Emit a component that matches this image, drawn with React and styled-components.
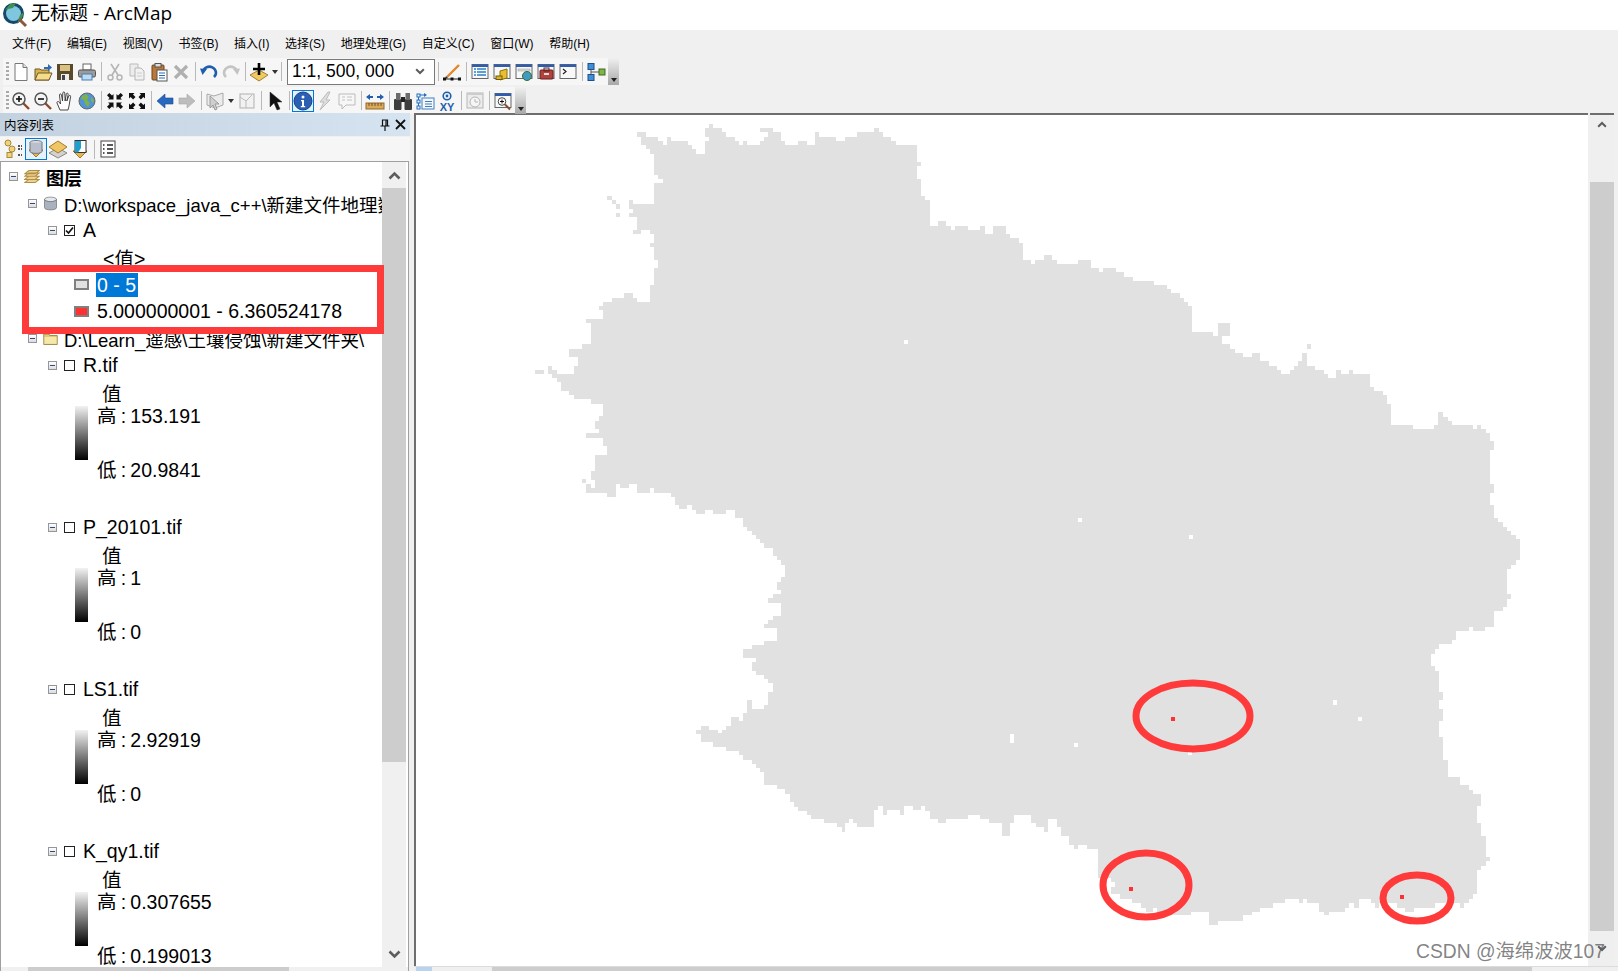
import React from "react";
import styled, { createGlobalStyle } from "styled-components";

//MAP OUTLINE - traced from the raster, each piece with its own origin and scale
const seg = (ox, oy, sx, sy, pts) => {
    const out = [];
    for (let i = 0; i < pts.length; i += 2) {
        out.push(Math.round(ox + pts[i] / sx) + "," + Math.round(oy + pts[i + 1] / sy));
    }
    return out;
};

const north = seg(520, 110, 2.8, 3, [328,66,353,66,353,80,386,80,386,93,400,93,400,105,412,105,412,80,423,80,423,93,470,93,470,105,482,105,482,117,493,117,493,131,518,131,518,93,529,93,529,80,518,80,518,54,529,54,529,42,540,42,540,54,566,54,566,66,577,66,577,80,602,80,602,93,613,93,613,105,624,105,624,93,636,93,636,105,672,105,672,93,683,93,683,80,694,80,694,66,672,66,672,54,708,54,708,66,731,66,731,93,742,93,742,105,778,105,778,93,804,93,804,105,826,105,826,66,837,66,837,80,885,80,885,93,910,93,910,80,944,80,944,66,991,66,991,54,1005,54,1005,66,1016,66,1016,80,1040,80,1040,93,1053,93,1053,105,1112,105,1112,155,1123,155,1123,167,1112,167,1112,207,1123,207,1123,258,1134,258,1134,270,1148,270,1148,348,1170,348,1170,333,1193,333,1193,348,1207,348,1207,360,1218,360,1218,348,1254,348,1254,360,1288,360,1288,348,1302,348,1302,372,1324,372,1324,348,1361,348,1361,372,1372,372,1372,384,1396,384,1396,399,1408,399,1408,450,1431,450,1431,462,1442,462,1442,450,1467,450,1467,435,1490,435,1490,450,1504,450,1504,462,1562,462,1562,450]);
const northEast = seg(1030, 240, 3, 3, [144,60,183,60,183,84,207,84,207,96,219,96,219,84,258,84,258,96,282,96,282,111,309,111,309,123,372,123,372,135,411,135,411,147,423,147,423,159,450,159,450,174,462,174,462,186,474,186,474,198,486,198,486,276,549,276,549,288,564,288,564,249,600,249,600,288,576,288,576,312,600,312,600,327,615,327,615,339,639,339,639,351,666,351,666,339,690,339,690,363,717,363,717,378,741,378,741,390,753,390,753,402,780,402,780,390,792,390,792,378,804,378,804,363,816,363,816,339,831,339,831,378,855,378,855,390,882,390,882,402,894,402,894,414,918,414,918,390,933,390,933,402,957,402,957,390,969,390,969,402,1020,402,1020,441,1032,441,1032,453,1059,453,1059,465,1071,465,1071,492,1083,492,1083,555,1149,555,1149,567,1212,567,1212,555,1224,555,1224,516]);
const east = seg(1059, 400, 2.796, 2.904, [1073,36,1073,48,1087,48,1087,60,1100,60,1100,72,1158,72,1158,84,1168,84,1168,72,1180,72,1180,84,1194,84,1194,96,1206,96,1206,120,1217,120,1217,144,1206,144,1206,243,1217,243,1217,270,1206,270,1206,305,1217,305,1217,342,1228,342,1228,354,1241,354,1241,368,1253,368,1253,380,1265,380,1265,392,1277,392,1277,404,1290,404,1290,464,1277,464,1277,478,1265,478,1265,490,1253,490,1253,562,1265,562,1265,577,1253,577,1253,600,1241,600,1241,612,1217,612,1217,660,1192,660,1192,672,1158,672,1158,660,1146,660,1146,672,1110,672,1110,698,1100,698,1100,710,1062,710,1062,722,1050,722,1050,737,1040,737,1040,772,1050,772,1050,786,1062,786,1062,848,1073,848,1073,870,1062,870,1062,897,1073,897,1073,932,1062,932,1062,980,1073,980,1073,1044,1087,1044,1087,1095,1121,1095,1121,1118,1146,1118,1146,1132,1158,1132,1158,1144,1180,1144,1180,1178,1168,1178,1168,1228,1180,1228,1180,1265,1194,1265,1194,1326,1206,1326,1206,1340,1194,1340,1194,1354,1180,1354,1180,1365,1168,1365,1168,1436,1158,1436,1158,1448,1146,1448,1146,1460,1133,1460,1133,1474,1121,1474,1121,1460,1052,1460,1052,1474,992,1474,992,1486,968,1486,968,1474,945,1474,945,1460,895,1460,895,1474,884,1474,884,1460,872,1460,872,1448,838,1448,838,1474,824,1474,824,1462,812,1462,812,1474,800,1474,800,1486,754,1486,754,1497,742,1497,742,1486,728,1486,728,1462,694,1462,694,1448,682,1448,682,1462,670,1462,670,1448,632,1448,632,1462,598,1462,598,1474,562,1474,562,1486,540,1486,540,1497,514,1497,514,1512,444,1512,444,1524,420,1524,420,1486,370,1486,370,1497,310,1497,310,1486,275,1486,275,1474,264,1474,264,1486,242,1486,242,1474,228,1474,228,1462,205,1462,205,1448,170,1448,170,1436,146,1436,146,1413,157,1413,157,1400,146,1400,146,1388,134,1388,110,1388,110,1303]);
const south = seg(660, 500, 3, 3, [1280,1047,1280,1034,1254,1034,1254,1047,1242,1047,1242,1034,1228,1034,1228,1008,1203,1008,1203,982,1190,982,1190,957,1165,957,1165,995,1152,995,1152,982,1127,982,1127,970,1113,970,1113,945,1063,945,1063,970,1050,970,1050,1007,1027,1007,1027,970,988,970,988,957,960,957,960,945,925,945,925,957,858,957,858,970,835,970,835,957,810,957,810,932,795,932,795,918,783,918,783,930,760,930,760,918,733,918,733,945,720,945,720,930,682,930,682,945,668,945,668,918,655,918,655,930,642,930,642,980,592,980,592,970,580,970,580,957,566,957,566,970,555,970,555,995,545,995,545,982,530,982,530,970,492,970,492,957,453,957,453,945,440,945,440,932,415,932,415,920,403,920,403,907,390,907,390,882,375,882,375,868,350,868,350,855,312,855,312,815,300,815,300,805,288,805,288,792,275,792,275,780,250,780,250,765,237,765,237,752,198,752,198,740,160,740,160,727,122,727,122,703,108,703,108,690,122,690,122,678,147,678,147,690,175,690,175,700,187,700,187,690,198,690,198,678,212,678,212,652,237,652,237,662,250,662,250,640,262,640,262,600,275,600,275,627,312,627,312,615,325,615,325,575,338,575,338,550,325,550,325,537,312,537,312,525,288,525,288,512,275,512,275,487,288,487,288,475,250,475,250,447,275,447,275,435,312,435,312,422,350,422,350,385,312,385,312,372,325,372,325,360,338,360,338,348,362,348,362,308,325,308,325,295,338,295,338,282,362,282,362,270,350,270,350,245,362,245,362,232,375,232,375,195,362,195,362,180,350,180,350,168,338,168,338,143,312,143,312,130,300,130,300,117,288,117,288,105,275,105,275,92,262,92,262,80,250,80,250,55,225,55,225,30,198,30,198,42,160,42,160,30,135,30,135,42,108,42,108,30,95,30,95,15,82,15,82,28,58,28,58,15,45,15,45,0]);
const west = seg(520, 110, 2.8, 3, [434,1160,424,1160,424,1148,375,1148,375,1134,364,1134,364,1148,328,1148,328,1122,305,1122,305,1134,280,1134,280,1122,269,1122,269,1160,244,1160,244,1148,185,1148,185,1122,199,1122,199,1134,210,1134,210,1110,199,1110,199,1083,210,1083,210,1035,244,1035,244,1008,232,1008,232,984,185,984,185,970,221,970,221,958,210,958,210,934,221,934,221,918,232,918,232,882,199,882,199,866,151,866,151,854,137,854,137,842,115,842,115,816,104,816,104,804,90,804,90,792,78,792,78,768,90,768,90,780,104,780,104,792,151,792,151,768,162,768,162,740,137,740,137,717,174,717,174,702,199,702,199,640,185,640,185,628,232,628,232,600,221,600,221,588,232,588,232,576,258,576,258,564,291,564,291,549,316,549,316,564,328,564,328,576,364,576,364,525,375,525,375,474,386,474,386,450,375,450,375,411,364,411,364,399,375,399,375,372,364,372,364,360,340,360,340,372,316,372,316,360,328,360,328,321,305,321,305,309,316,309,316,296,305,296,305,270,316,270,316,282,375,282,375,219,400,219,400,207,386,207,386,195,375,195,375,131,364,131,364,117,353,117,353,105,340,105,340,80,328,80]);
const OUTLINE = [...north, ...northEast, ...east, ...south, ...west].join(" ");

const ISLANDS = [[535,370,9,4],[582,479,4,4],[607,196,5,4],[612,200,4,4],[616,204,4,5],[616,213,4,4],[1307,344,4,5]];
const HOLES = [[904,340,4,4],[1078,518,4,4],[1189,535,4,4],[1333,700,4,5],[1358,717,4,4],[1074,743,4,4],[1188,752,4,3],[1010,734,4,9]];
const DOTS = [[1171,717],[1129,887],[1400,895]];
const CIRCLES = [[1193,716,57,33],[1146,885,43,32],[1417,898,34,23]];

//ICONS
const Svg = ({ children, size = 20 }) => <svg width={size} height={size} viewBox="0 0 20 20">{children}</svg>;
const Mag = ({ sign }) => (
    <Svg>
        <path d="M12 12l6 6" stroke="#8a4b2d" strokeWidth="2.4" />
        <circle cx="8" cy="8" r="6" fill="#f4f4f4" stroke="#555" strokeWidth="1.5" />
        <path d="M5 8h6" stroke="#111" strokeWidth="1.6" />
        {sign && <path d="M8 5v6" stroke="#111" strokeWidth="1.6" />}
    </Svg>
);
const Win = ({ children }) => (
    <Svg>
        <rect x="2" y="2.5" width="16" height="14" fill="#f8f8f8" stroke="#666" />
        <rect x="2" y="2.5" width="16" height="2.5" fill="#2d5cb0" />
        {children}
    </Svg>
);
const Globe = () => (
    <Svg>
        <circle cx="10" cy="10" r="8" fill="#4f94d6" stroke="#666" />
        <path d="M5 5l4-2 3 3-2 3 3 3-2 4-3-3-1-4-3-1zM14 6l3 3-1 3-2-2z" fill="#7db04e" />
    </Svg>
);
// four small corner arrows, one drawn and mirrored
const Arrows = ({ out }) => (
    <Svg>
        {["", "translate(20 0) scale(-1 1)", "translate(0 20) scale(1 -1)", "translate(20 20) scale(-1 -1)"].map((t) => (
            <g key={t} transform={t}>
                {out
                    ? <path d="M2 2h5.5L6 3.6l2.5 2.5-2.4 2.4L3.6 6 2 7.5z" fill="#111" />
                    : <path d="M8.5 8.5H3L4.6 7 2 4.3 4.3 2 7 4.6 8.5 3z" fill="#111" />}
            </g>
        ))}
    </Svg>
);
const Horizontal = ({ left, color, rim }) => (
    <Svg>
        <path d={left ? "M2 10l8-7v4h8v6h-8v4z" : "M18 10l-8-7v4H2v6h8v4z"} fill={color} stroke={rim} strokeWidth=".6" />
    </Svg>
);
const Diamond = ({ children }) => (
    <Svg>
        <path d="M10 8l9 5-9 6-9-6z" fill="#f0c95f" stroke="#a5803a" />
        {children}
    </Svg>
);

const icons = {
    doc: <Svg><path d="M4 1.5h8l4 4v13H4z" fill="#fff" stroke="#777" /><path d="M12 1.5v4h4" fill="#ddd" stroke="#777" /></Svg>,
    open: <Svg><path d="M2 7h5l1 1h8v10H2z" fill="#d8b350" stroke="#6e5a22" /><path d="M2 18l3-7h14l-3 7z" fill="#f4dc8c" stroke="#6e5a22" /><path d="M11 5h4V2l4 3.5-4 3.5V7h-4z" fill="#2d6bb5" /></Svg>,
    save: <Svg><rect x="2" y="2" width="16" height="16" fill="#5a4a2c" /><rect x="5" y="3" width="10" height="6" fill="#d9c083" /><rect x="6" y="12" width="8" height="6" fill="#eee" /><rect x="7" y="13" width="3" height="5" fill="#444" /></Svg>,
    print: <Svg><rect x="6" y="2" width="8" height="6" fill="#fff" stroke="#666" /><rect x="1.5" y="8" width="17" height="7" rx="1.5" fill="#9b9b9b" stroke="#555" /><rect x="5" y="12" width="10" height="6" fill="#bcdcf5" stroke="#4a7fb5" /></Svg>,
    cut: <Svg><path d="M6 2l7 11M14 2L7 13" stroke="#b5b5b5" strokeWidth="1.6" /><circle cx="5.5" cy="15.5" r="2.5" fill="none" stroke="#b5b5b5" strokeWidth="1.5" /><circle cx="14.5" cy="15.5" r="2.5" fill="none" stroke="#b5b5b5" strokeWidth="1.5" /></Svg>,
    copy: <Svg><path d="M3 2h8v12H3z" fill="#ececec" stroke="#bbb" /><path d="M8 6h6l3 3v9H8z" fill="#f1f1f1" stroke="#b5b5b5" /><path d="M10 11h5M10 14h5" stroke="#ccc" /></Svg>,
    paste: <Svg><rect x="3" y="3" width="12" height="15" rx="1" fill="#b9793a" stroke="#6b4420" /><rect x="6" y="1.5" width="6" height="3.5" fill="#ddd" stroke="#555" /><rect x="8" y="8" width="10" height="11" fill="#fff" stroke="#555" /><path d="M10 11h6M10 13.5h6M10 16h6" stroke="#2d6bb5" /></Svg>,
    del: <Svg><path d="M4 4l12 12M16 4L4 16" stroke="#b0b0b0" strokeWidth="3.2" /></Svg>,
    undo: <Svg><path d="M4 10a6.5 6 0 1 1 11 5" fill="none" stroke="#1f5fae" strokeWidth="2.6" /><path d="M1 6.5l7 .5-4.5 6z" fill="#1f5fae" /></Svg>,
    redo: <Svg><path d="M16 10a6.5 6 0 1 0-11 5" fill="none" stroke="#c4c4c4" strokeWidth="2.6" /><path d="M19 6.5l-7 .5 4.5 6z" fill="#c4c4c4" /></Svg>,
    add: <Diamond><path d="M10 1v12M4 7h12" stroke="#000" strokeWidth="2.6" /></Diamond>,
    edit: <Svg><path d="M5 15L17 3" stroke="#e0882a" strokeWidth="2.4" /><path d="M3 17l1-3 2 2z" fill="#333" /><path d="M2 17h16" stroke="#222" /><rect x="1" y="15.5" width="3" height="3" fill="#111" /><rect x="8.5" y="15.5" width="3" height="3" fill="#111" /><rect x="16" y="15.5" width="3" height="3" fill="#111" /></Svg>,
    toc: <Win><path d="M4 7h2M7 7h9M4 10h2M7 10h9M4 13h2M7 13h9" stroke="#2d7fc9" strokeWidth="1.3" /></Win>,
    catalog: <Win><path d="M8 9l7-2v9l-7 2z" fill="#e8c02e" stroke="#8a6f12" /><rect x="4" y="14" width="6" height="3.5" fill="#d9b429" stroke="#6f5a10" /></Win>,
    search: <Win><rect x="4" y="7" width="12" height="2" fill="#ddd" stroke="#999" strokeWidth=".5" /><circle cx="13" cy="14" r="4.5" fill="#3f9ac4" stroke="#3b6f2c" /></Win>,
    tools: <Win><rect x="4" y="8" width="13" height="9" rx="1" fill="#b4413c" stroke="#632320" /><rect x="8" y="6" width="5" height="3" fill="none" stroke="#632320" /><rect x="8" y="11" width="5" height="2" fill="#ddd" /></Win>,
    cmd: <Win><path d="M5 7l3 2.5L5 12" fill="none" stroke="#222" strokeWidth="1.2" /></Win>,
    model: <Svg><rect x="2" y="1.5" width="6" height="6" fill="#3f8fd8" stroke="#1f4f8a" /><rect x="2" y="12.5" width="6" height="6" fill="#3f8fd8" stroke="#1f4f8a" /><rect x="13" y="7" width="6" height="6" fill="#7fb44a" stroke="#3e6a20" /><path d="M5 7.5V10h8M5 12.5V10" fill="none" stroke="#555" /></Svg>,
    zoomIn: <Mag sign />,
    zoomOut: <Mag />,
    pan: <Svg><path d="M5 19l-3-7c-.5-1.5 1.5-2 2.3-.7L5.5 13 4.5 4c0-1.4 1.8-1.4 2 0l1 6 .3-8c.1-1.4 1.9-1.4 2 0l.3 8 1.2-7c.3-1.3 2-1 1.9.3L11.8 10l2-5c.5-1.2 2.2-.7 1.8.6L14 15l-1 4z" fill="#fff" stroke="#333" strokeWidth=".9" /></Svg>,
    globe: <Globe />,
    fixIn: <Arrows />,
    fixOut: <Arrows out />,
    back: <Horizontal left color="#2767c0" rim="#1b4a8c" />,
    forward: <Horizontal color="#bdbdbd" rim="#aaa" />,
    select: <Svg><path d="M2 3l7 2 9-3v12l-8 3-8-3z" fill="#ececec" stroke="#aaa" /><path d="M5 5l0 12 3-3 2 5 2-1-2-5 4 0z" fill="#cfcfcf" stroke="#9c9c9c" /></Svg>,
    clear: <Svg><rect x="3" y="3" width="14" height="14" fill="#f2f2f2" stroke="#b0b0b0" /><path d="M3 6l6 4 6-6M9 10v7" fill="none" stroke="#bbb" /></Svg>,
    cursor: <Svg><path d="M5 1l0 15 4-4 3 7 3-1-3-7 5 0z" fill="#111" stroke="#333" strokeWidth=".5" /></Svg>,
    identify: <Svg size={20}><circle cx="10" cy="10" r="9" fill="#2b5fb4" stroke="#1d3f80" /><circle cx="10" cy="6" r="1.5" fill="#fff" /><path d="M8 9h3v6h1.2v1.2H7.8V15H9v-4.8H8z" fill="#fff" /></Svg>,
    flash: <Svg><path d="M13 1L5 11h4L5 19l10-10h-4l4-8z" fill="#dedede" stroke="#bbb" /></Svg>,
    bubble: <Svg><path d="M2 3h16v11H9l-4 4v-4H2z" fill="#f7f7f7" stroke="#bbb" /><path d="M5 6h3M10 6h5M5 9h3M10 9h5" stroke="#c2c2c2" /></Svg>,
    measure: <Svg><rect x="1" y="12" width="18" height="6" fill="#dba95a" stroke="#8f6a2b" /><path d="M4 12v3M7 12v3M10 12v3M13 12v3M16 12v3" stroke="#6e5020" /><path d="M1 6l4-3v2h3v2H5v2zM19 6l-4-3v2h-3v2h3v2z" fill="#1f5fae" /></Svg>,
    binoculars: <Svg><rect x="1" y="8" width="7.5" height="11" rx="1" fill="#3d3d3d" /><rect x="11.5" y="8" width="7.5" height="11" rx="1" fill="#3d3d3d" /><rect x="3" y="2" width="4.5" height="7" fill="#6b6b6b" /><rect x="12.5" y="2" width="4.5" height="7" fill="#6b6b6b" /><rect x="8" y="6" width="4" height="5" fill="#222" /></Svg>,
    goto: <Svg><rect x="7" y="7" width="12" height="11" fill="#f4f8fc" stroke="#3f7fbf" /><path d="M10 10.5h7M10 13h7M10 15.5h7" stroke="#3f7fbf" /><rect x="2" y="3" width="3" height="3" fill="none" stroke="#1f6fc0" /><rect x="2" y="9" width="3" height="3" fill="none" stroke="#1f6fc0" /><rect x="2" y="15" width="3" height="3" fill="none" stroke="#1f6fc0" /><path d="M3.5 6v3M3.5 12v3M5 4h4" stroke="#1f6fc0" /><path d="M9 2l3 2-3 2z" fill="#1f6fc0" /></Svg>,
    xy: <Svg><circle cx="10" cy="5" r="3.8" fill="none" stroke="#1f5fae" strokeWidth="1.6" /><circle cx="10" cy="5" r="1.4" fill="#1f5fae" /><text x="10" y="19.5" textAnchor="middle" fontFamily="Liberation Sans, sans-serif" fontWeight="700" fontSize="11" fill="#1f5fae">XY</text></Svg>,
    time: <Svg><rect x="2" y="2" width="16" height="15" fill="#ececec" stroke="#b5b5b5" /><rect x="2" y="2" width="16" height="2" fill="#ccc" /><circle cx="10" cy="11" r="5" fill="#f6f6f6" stroke="#b5b5b5" /><path d="M10 8v3h3" fill="none" stroke="#b5b5b5" /></Svg>,
    viewer: <Win><circle cx="9" cy="10.5" r="3.8" fill="#fff" stroke="#444" /><path d="M7 10.5h4M9 8.5v4" stroke="#111" /><path d="M12 13.5l5 5" stroke="#8a4b2d" strokeWidth="2" /></Win>,
    drawOrder: <Svg><circle cx="4" cy="4" r="3" fill="#f1d27a" stroke="#a98a3c" /><circle cx="8" cy="10" r="3" fill="#f1d27a" stroke="#a98a3c" /><rect x="3" y="13.5" width="5" height="5" fill="#f1d27a" stroke="#a98a3c" /><path d="M14 7h4M14 10h4M14 16h4" stroke="#222" strokeWidth="1.5" strokeDasharray="2 1" /></Svg>,
    source: <Svg><path d="M3 11l7 7 7-7z" fill="#e8b651" stroke="#a27a2a" /><ellipse cx="10" cy="3.5" rx="6" ry="2" fill="#dfe3ea" stroke="#777" /><path d="M4 3.5v9c0 2.5 12 2.5 12 0v-9" fill="#b9bfcc" stroke="#777" /></Svg>,
    visibility: <Svg><path d="M10 9l9 5-9 5-9-5z" fill="#d2d2d2" stroke="#888" /><path d="M10 2l9 6-9 6-9-6z" fill="#f0c664" stroke="#a27a2a" /></Svg>,
    selection: <Svg><path d="M3 12l7 7 7-7z" fill="#e8b651" stroke="#a27a2a" /><rect x="5" y="1.5" width="11" height="12" fill="#fff" stroke="#333" /><path d="M5 2h6v7l-3 4.5H5z" fill="#1f9fcf" /></Svg>,
    options: <Svg><rect x="3" y="2" width="14" height="16" fill="#fff" stroke="#444" /><path d="M5 6h1.5M9 6h6M5 10h1.5M9 10h6M5 14h1.5M9 14h6" stroke="#222" strokeWidth="1.4" /></Svg>,
    layers: <Svg size={16}><path d="M1 17h13l5-4H6zM1 13h13l5-4H6zM1 9h13l5-4H6zM1 6h13l5-4H6z" fill="#ecd093" stroke="#b08f42" strokeWidth="1.3" /></Svg>,
    db: <Svg size={15}><ellipse cx="10" cy="4.5" rx="8" ry="3" fill="#e4e8ef" stroke="#777" /><path d="M2 4.5v11c0 4 16 4 16 0v-11c0 4-16 4-16 0z" fill="#aab2c0" stroke="#777" /></Svg>,
    folder: <Svg size={15}><path d="M1 4h7l1 2h10v12H1z" fill="#e5c877" stroke="#8a7431" /><rect x="2" y="8" width="16" height="9" fill="#f6e7ab" /></Svg>,
    tick: <svg width="9" height="9" viewBox="0 0 9 9"><path d="M1 4.5l2.5 2.5L8 1.5" fill="none" stroke="#111" strokeWidth="1.7" /></svg>,
    appGlobe: <svg width="26" height="26" viewBox="0 0 26 26"><circle cx="11.5" cy="11.5" r="10.5" fill="#16486b" /><circle cx="11.5" cy="11.5" r="7.5" fill="#7fc6df" /><path d="M3 8l5-6 6-1-3 5-5 1zM15 22l5-6 2-6-4 3z" fill="#3e8f52" /><path d="M17 17l7 7" stroke="#8a5a3a" strokeWidth="3" /></svg>
};

const Chevron = ({ up, small }) => (
    <svg width={small ? 10 : 13} height={small ? 7 : 9} viewBox="0 0 13 9">
        <path d={up ? "M1.5 7.5l5-5 5 5" : "M1.5 1.5l5 5 5-5"} fill="none" stroke="#5d5d5d" strokeWidth="2.6" />
    </svg>
);

//DATA
const MENU = ["文件(F)", "编辑(E)", "视图(V)", "书签(B)", "插入(I)", "选择(S)", "地理处理(G)", "自定义(C)", "窗口(W)", "帮助(H)"];
const LAYERS = [
    { name: "R.tif", high: "153.191", low: "20.9841" },
    { name: "P_20101.tif", high: "1", low: "0" },
    { name: "LS1.tif", high: "2.92919", low: "0" },
    { name: "K_qy1.tif", high: "0.307655", low: "0.199013" }
];

const App = () => {
    const tool = (names) => names.map((n, i) => {
        if (n === "|") return <Sep key={i} />;
        if (n === "v") return <Drop key={i} />;
        return <Btn key={n} $active={n === "identify" || n === "source"}>{icons[n]}</Btn>;
    });

    return (
        <Page>
            <GlobalStyle />
            <TitleBar>
                {icons.appGlobe}
                <TitleText>无标题 - ArcMap</TitleText>
            </TitleBar>
            <MenuBar>
                {MENU.map((m) => <MenuItem key={m}>{m}</MenuItem>)}
            </MenuBar>
            <Toolbar>
                <Grip />
                {tool(["doc", "open", "save", "print", "|", "cut", "copy", "paste", "del", "|", "undo", "redo", "|", "add", "v"])}
                <Sep $narrow />
                <Combo>
                    <span>1:1, 500, 000</span>
                    <Chevron small />
                </Combo>
                <Sep />
                {tool(["edit", "|", "toc", "catalog", "search", "tools", "cmd", "|", "model"])}
                <EndGrip />
            </Toolbar>
            <Toolbar $second>
                <Grip />
                {tool(["zoomIn", "zoomOut", "pan", "globe", "|", "fixIn", "fixOut", "|", "back", "forward", "|", "select", "v", "clear", "|", "cursor", "|", "identify", "flash", "bubble", "|", "measure", "|", "binoculars", "goto", "xy", "|", "time", "|", "viewer"])}
                <EndGrip />
            </Toolbar>
            <Main>
                <Panel>
                    <PanelTitle>
                        <span>内容列表</span>
                        <PanelActions>
                            <svg width="12" height="12" viewBox="0 0 12 12"><path d="M3.5 1h5v6h-5zM1.5 7h9M6 7v5M7 1v6" fill="none" stroke="#111" strokeWidth="1.2" /></svg>
                            <svg width="11" height="11" viewBox="0 0 11 11"><path d="M1 1l9 9M10 1l-9 9" stroke="#111" strokeWidth="1.8" /></svg>
                        </PanelActions>
                    </PanelTitle>
                    <PanelTools>
                        {tool(["drawOrder", "source", "visibility", "selection", "|", "options"])}
                    </PanelTools>
                    <Tree>
                        <TreeBody>
                            <TreeContent>
                                <Row $left={8} $gap={6}>
                                    <Expander />
                                    {icons.layers}
                                    <RootLabel>图层</RootLabel>
                                </Row>
                                <Row $left={27} $gap={6}>
                                    <Expander />
                                    {icons.db}
                                    <PathLabel>D:\workspace_java_c++\新建文件地理数据库</PathLabel>
                                </Row>
                                <Row $left={47} $gap={7}>
                                    <Expander />
                                    <CheckBox>{icons.tick}</CheckBox>
                                    <Plain>A</Plain>
                                </Row>
                                <Row $left={102}><span>&lt;值&gt;</span></Row>
                                <Row $left={73} $gap={7}>
                                    <Swatch $fill="#e1e1e1" />
                                    <Selected>0 - 5</Selected>
                                </Row>
                                <Row $left={73} $gap={7}>
                                    <Swatch $fill="#ff3030" />
                                    <Plain>5.000000001 - 6.360524178</Plain>
                                </Row>
                                <Row $left={27} $gap={6}>
                                    <Expander />
                                    {icons.folder}
                                    <PathLabel>D:\Learn_遥感\土壤侵蚀\新建文件夹\</PathLabel>
                                </Row>
                                {LAYERS.map((l) => (
                                    <div key={l.name}>
                                        <Row $left={47} $gap={7}>
                                            <Expander />
                                            <CheckBox />
                                            <Plain>{l.name}</Plain>
                                        </Row>
                                        <Row $left={101}><span>值</span></Row>
                                        <Legend>
                                            <Ramp />
                                            <RampLabels>
                                                <span>高 : {l.high}</span>
                                                <span>低 : {l.low}</span>
                                            </RampLabels>
                                        </Legend>
                                    </div>
                                ))}
                                <Highlight />
                            </TreeContent>
                            <TreeScroll>
                                <ArrowCell><Chevron up /></ArrowCell>
                                <TreeThumb />
                                <Spacer />
                                <ArrowCell><Chevron /></ArrowCell>
                            </TreeScroll>
                        </TreeBody>
                        <HScroll><HThumb /></HScroll>
                    </Tree>
                </Panel>
                <MapColumn>
                    <MapRow>
                        <MapPane>
                            <svg width="1172" height="852" viewBox="416 115 1172 852" shapeRendering="crispEdges">
                                <polygon points={OUTLINE} fill="#e1e1e1" />
                                {ISLANDS.map(([x, y, w, h]) => <rect key={x + "-" + y} x={x} y={y} width={w} height={h} fill="#e1e1e1" />)}
                                {HOLES.map(([x, y, w, h]) => <rect key={x + "-" + y} x={x} y={y} width={w} height={h} fill="#fff" />)}
                                {DOTS.map(([x, y]) => <rect key={x} x={x} y={y} width={4} height={4} fill="#ff3030" />)}
                                <g shapeRendering="auto">
                                    {CIRCLES.map(([cx, cy, rx, ry]) => <ellipse key={cx} cx={cx} cy={cy} rx={rx} ry={ry} fill="none" stroke="#ff3a3a" strokeWidth="7" />)}
                                </g>
                            </svg>
                        </MapPane>
                        <MapScroll>
                            <MapArrowTop><Chevron up small /></MapArrowTop>
                            <MapThumb />
                            <MapArrowBottom><Chevron small /></MapArrowBottom>
                        </MapScroll>
                    </MapRow>
                    <MapFooter>
                        <MapTab />
                        <MapHThumb />
                    </MapFooter>
                </MapColumn>
            </Main>
            <Watermark>CSDN @海绵波波107</Watermark>
        </Page>
    );
};

//STYLE
const GlobalStyle = createGlobalStyle`
    html, body {
        margin: 0;
        padding: 0;
        height: 100%;
        overflow: hidden;
        background: #f0f0f0;
    }
`;

const CJK = `"Liberation Sans", "Noto Sans CJK SC", sans-serif`;

const Page = styled.div`
    position: relative;
    width: 1618px;
    height: 971px;
    overflow: hidden;
    display: flex;
    flex-direction: column;
    background: #f0f0f0;
    font-family: ${CJK};
    color: #000;
`;

const TitleBar = styled.div`
    height: 30px;
    display: flex;
    align-items: center;
    gap: 3px;
    padding-left: 2px;
    background: #fff;
`;

const TitleText = styled.div`
    font-family: "Open Sans", "Noto Sans CJK SC", sans-serif;
    font-size: 19px;
    line-height: 24px;
    padding-bottom: 5px;
`;

const MenuBar = styled.div`
    height: 28px;
    box-sizing: border-box;
    display: flex;
    align-items: center;
    gap: 15.7px;
    padding: 0 0 4px 12px;
    font-size: 12px;
`;

const MenuItem = styled.div`
    white-space: nowrap;
`;

const Toolbar = styled.div`
    height: 27px;
    width: fit-content;
    display: flex;
    align-items: center;
    padding-left: 3px;
    margin-left: 3px;
    margin-top: ${(p) => (p.$second ? "2px" : "0")};
    margin-bottom: ${(p) => (p.$second ? "-1px" : "0")};
    background: #f6f6f6;
`;

const Grip = styled.div`
    width: 3px;
    height: 20px;
    margin-right: 1px;
    background: repeating-linear-gradient(to bottom, #a9a9a9 0 2px, transparent 2px 4px);
`;

const EndGrip = styled.div`
    width: 11px;
    align-self: stretch;
    margin-left: 1px;
    background: linear-gradient(to bottom, #f0f0f0, #a8a8a8);
    position: relative;
    &::after {
        content: "";
        position: absolute;
        left: 2.5px;
        bottom: 3px;
        border-top: 4px solid #222;
        border-left: 3px solid transparent;
        border-right: 3px solid transparent;
    }
`;

const Btn = styled.div`
    width: 22px;
    height: 22px;
    flex: none;
    box-sizing: border-box;
    display: flex;
    align-items: center;
    justify-content: center;
    border: ${(p) => (p.$active ? "1px solid #0078d7" : "none")};
    background: ${(p) => (p.$active ? "#e5f1fb" : "transparent")};
`;

const Sep = styled.div`
    width: 1px;
    height: 19px;
    flex: none;
    margin: 0 ${(p) => (p.$narrow ? "1px" : "2.5px")};
    background: #b9b9b9;
`;

const Drop = styled.div`
    width: 10px;
    flex: none;
    display: flex;
    justify-content: center;
    &::after {
        content: "";
        border-top: 4px solid #333;
        border-left: 3.5px solid transparent;
        border-right: 3.5px solid transparent;
    }
`;

const Combo = styled.div`
    width: 148px;
    height: 26px;
    flex: none;
    box-sizing: border-box;
    display: flex;
    align-items: center;
    justify-content: space-between;
    margin-left: 4px;
    padding: 0 9px 0 4px;
    background: #fff;
    border: 1px solid #7a7a7a;
    font-size: 17.5px;
`;

const Main = styled.div`
    flex: 1;
    min-height: 0;
    display: flex;
`;

const Panel = styled.div`
    width: 410px;
    flex: none;
    display: flex;
    flex-direction: column;
`;

const PanelTitle = styled.div`
    height: 23px;
    flex: none;
    display: flex;
    align-items: center;
    justify-content: space-between;
    padding: 0 4px;
    background: linear-gradient(to right, #c3d2e0, #d6e3f0);
    font-size: 12.5px;
`;

const PanelActions = styled.div`
    display: flex;
    align-items: center;
    gap: 4px;
`;

const PanelTools = styled.div`
    height: 24px;
    flex: none;
    display: flex;
    align-items: center;
    margin-top: 1px;
    padding-left: 3px;
    background: #f6f6f6;
`;

const Tree = styled.div`
    flex: 1;
    min-height: 0;
    display: flex;
    flex-direction: column;
    background: #fff;
    border-top: 1px solid #a0a0a0;
    border-left: 1px solid #a0a0a0;
    border-right: 1px solid #a0a0a0;
    margin-right: 1px;
`;

const TreeBody = styled.div`
    position: relative;
    flex: 1;
    min-height: 0;
    display: flex;
    overflow: hidden;
`;

const TreeContent = styled.div`
    width: 381px;
    flex: none;
    padding-top: 1px;
    font-size: 19.5px;
`;

const Row = styled.div`
    height: 27px;
    display: flex;
    align-items: center;
    gap: ${(p) => p.$gap || 0}px;
    padding-left: ${(p) => p.$left}px;
    overflow: hidden;
    white-space: nowrap;
    svg {
        flex: none;
    }
`;

const Expander = styled.div`
    width: 9px;
    height: 9px;
    flex: none;
    box-sizing: border-box;
    display: flex;
    align-items: center;
    justify-content: center;
    border: 1px solid #969696;
    background: linear-gradient(to bottom, #fff, #dcdcdc);
    &::after {
        content: "";
        width: 5px;
        height: 1px;
        background: #2d4a86;
    }
`;

const RootLabel = styled.span`
    font-weight: 700;
    font-size: 18px;
`;

const PathLabel = styled.span`
    font-size: 18.5px;
`;

const CheckBox = styled.div`
    width: 11px;
    height: 11px;
    flex: none;
    box-sizing: border-box;
    display: flex;
    align-items: center;
    justify-content: center;
    border: 1px solid #222;
    background: #fff;
`;

const Swatch = styled.div`
    width: 11px;
    height: 7px;
    flex: none;
    border: 2.5px solid #808080;
    background: ${(p) => p.$fill};
`;

const Plain = styled.span`
    padding: 0 1px;
`;

const Selected = styled(Plain)`
    padding: 0 2px 0 1px;
    line-height: 24px;
    background: #0078d7;
    color: #fff;
`;

const Legend = styled.div`
    display: flex;
    gap: 9px;
    padding: 0 0 34px 74px;
`;

const Ramp = styled.div`
    width: 13px;
    height: 54px;
    flex: none;
    background: linear-gradient(to bottom, #f2f2f2, #000);
`;

const RampLabels = styled.div`
    display: flex;
    flex-direction: column;
    justify-content: space-between;
    height: 74px;
    line-height: 20px;
    white-space: nowrap;
    word-spacing: -1.2px;
`;

const Highlight = styled.div`
    position: absolute;
    left: 21px;
    top: 103px;
    width: 348px;
    height: 55px;
    border: 7px solid #ff3a3a;
`;

const TreeScroll = styled.div`
    width: 24px;
    flex: none;
    display: flex;
    flex-direction: column;
    background: #f0f0f0;
`;

const ArrowCell = styled.div`
    height: 26px;
    flex: none;
    display: flex;
    align-items: center;
    justify-content: center;
`;

const TreeThumb = styled.div`
    height: 574px;
    flex: none;
    background: #cdcdcd;
`;

const Spacer = styled.div`
    flex: 1;
`;

const HScroll = styled.div`
    height: 4px;
    flex: none;
    background: #f0f0f0;
`;

const HThumb = styled.div`
    width: 261px;
    height: 100%;
    margin-left: 27px;
    background: #cdcdcd;
`;

const MapColumn = styled.div`
    flex: 1;
    min-width: 0;
    display: flex;
    flex-direction: column;
    padding-left: 4px;
`;

const MapRow = styled.div`
    flex: 1;
    min-height: 0;
    display: flex;
    gap: 2px;
`;

const MapPane = styled.div`
    width: 1172px;
    flex: none;
    overflow: hidden;
    background: #fff;
    border-top: 2px solid #6e6e6e;
    border-left: 2px solid #6e6e6e;
    line-height: 0;
`;

const MapScroll = styled.div`
    width: 24px;
    flex: none;
    display: flex;
    flex-direction: column;
    background: #efefef;
    border-top: 2px solid #6e6e6e;
`;

const MapArrowTop = styled.div`
    height: 67px;
    flex: none;
    display: flex;
    justify-content: center;
    padding-top: 6px;
    box-sizing: border-box;
`;

const MapThumb = styled.div`
    height: 749px;
    flex: none;
    background: #cdcdcd;
`;

const MapArrowBottom = styled.div`
    flex: 1;
    display: flex;
    align-items: center;
    justify-content: center;
`;

const MapFooter = styled.div`
    height: 4px;
    flex: none;
    display: flex;
    background: #efefef;
    border-top: 1px solid #dcdcdc;
`;

const MapTab = styled.div`
    width: 16px;
    margin-left: 2px;
    background: #b9d3ee;
`;

const MapHThumb = styled.div`
    width: 1040px;
    margin-left: 60px;
    background: #cdcdcd;
`;

const Watermark = styled.div`
    position: absolute;
    left: 1416px;
    top: 940px;
    font-size: 19.3px;
    line-height: 24px;
    color: rgba(90, 90, 90, 0.75);
    white-space: nowrap;
`;

export default App;
